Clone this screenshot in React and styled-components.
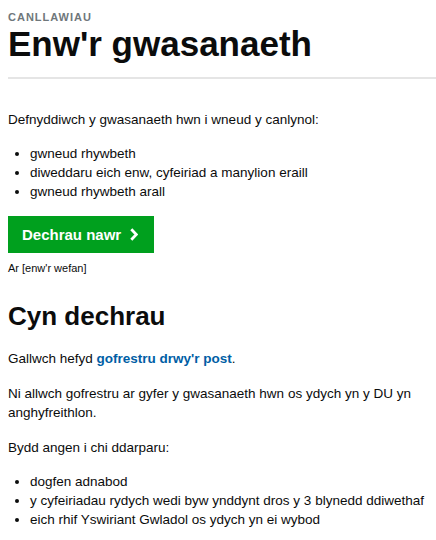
import React from 'react'
import styled, { createGlobalStyle } from 'styled-components'

const GlobalStyle = createGlobalStyle`
  body {
    margin: 0;
    background: #ffffff;
    font-family: "Liberation Sans", Arial, sans-serif;
    color: #0b0c0c;
  }
`

const Page = styled.main`
  padding: 10px 0 0 8px;
`

const Caption = styled.span`
  display: block;
  font-size: 11px;
  font-weight: 700;
  letter-spacing: 1px;
  color: #6f777b;
  line-height: 14px;
`

const Title = styled.h1`
  margin: 0;
  font-size: 35px;
  font-weight: 700;
  line-height: 40px;
`

const Rule = styled.hr`
  border: 0;
  border-top: 2px solid #e5e5e5;
  margin: 13px 0 0 0;
`

const Para = styled.p`
  margin: ${(p) => p.top || 31}px 0 0;
  font-size: 13.5px;
  line-height: 19px;
  padding-right: 8px;
`

const List = styled.ul`
  margin: 15px 0 0;
  padding-left: 22px;
  font-size: 13.5px;
  line-height: 19px;
  list-style: disc;
`

const StartButton = styled.a`
  margin-top: 15px;
  display: inline-flex;
  align-items: center;
  gap: 9px;
  height: 37px;
  padding: 0 16px 0 14px;
  background: #00a01e;
  color: #ffffff;
  font-size: 15px;
  font-weight: 700;
  text-decoration: none;
`

const Small = styled.p`
  margin: 8px 0 0;
  font-size: 11px;
  line-height: 14px;
`

const Heading = styled.h2`
  margin: 24px 0 0;
  font-size: 26px;
  font-weight: 700;
  line-height: 34px;
`

const Link = styled.a`
  color: #005ea5;
  font-weight: 700;
  text-decoration: none;
`

const Chevron = () => (
  <svg width="8" height="13" viewBox="0 0 8 13" aria-hidden="true">
    <path d="M1.3 1.3 L6.3 6.5 L1.3 11.7" fill="none" stroke="#fff" strokeWidth="2.8" />
  </svg>
)

export default function App() {
  return (
    <Page>
      <GlobalStyle />
      <Caption>CANLLAWIAU</Caption>
      <Title>Enw'r gwasanaeth</Title>
      <Rule />
      <Para>Defnyddiwch y gwasanaeth hwn i wneud y canlynol:</Para>
      <List>
        <li>gwneud rhywbeth</li>
        <li>diweddaru eich enw, cyfeiriad a manylion eraill</li>
        <li>gwneud rhywbeth arall</li>
      </List>
      <StartButton href="#">
        Dechrau nawr <Chevron />
      </StartButton>
      <Small>Ar [enw'r wefan]</Small>
      <Heading>Cyn dechrau</Heading>
      <Para top={16}>
        Gallwch hefyd <Link href="#">gofrestru drwy'r post</Link>.
      </Para>
      <Para top={16}>
        Ni allwch gofrestru ar gyfer y gwasanaeth hwn os ydych yn y DU yn anghyfreithlon.
      </Para>
      <Para top={16}>Bydd angen i chi ddarparu:</Para>
      <List>
        <li>dogfen adnabod</li>
        <li>y cyfeiriadau rydych wedi byw ynddynt dros y 3 blynedd ddiwethaf</li>
        <li>eich rhif Yswiriant Gwladol os ydych yn ei wybod</li>
      </List>
    </Page>
  )
}
